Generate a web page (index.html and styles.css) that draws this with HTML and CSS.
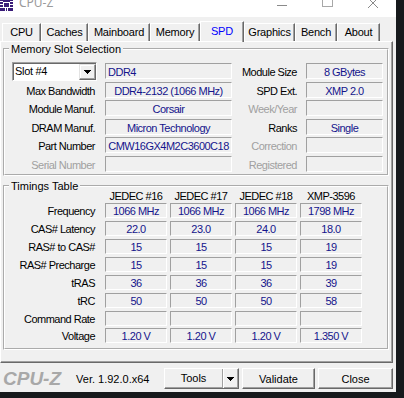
FILE: index.html
```html
<!DOCTYPE html>
<html lang="en">
<head>
    <meta charset="UTF-8">
    <title>CPU-Z</title>
    <link rel="stylesheet" href="styles.css">
</head>
<body>
    <div class="window">
        <div class="titlebar">
            <svg class="app-icon" viewBox="0 0 13 11">
                <rect width="13" height="11" fill="#3a1c78"/>
                <rect x="3.5" y="2.5" width="6" height="5" fill="none" stroke="#fff"/>
                <path d="M0 1.5h3M0 4.5h3M0 7.5h3M10 1.5h3M10 4.5h3M10 7.5h3M5.5 8v3M7.5 8v3" stroke="#fff"/>
            </svg>
            <span class="title">CPU-Z</span>
            <svg class="controls" viewBox="0 0 120 17">
                <path d="M1 5.5h10" stroke="#8a8a8a"/>
                <rect x="46.5" y="-3.5" width="10" height="10" fill="none" stroke="#a8a8a8"/>
                <path d="M92 -2l10 10M102 -2l-10 10" stroke="#8a8a8a"/>
            </svg>
        </div>

        <div class="tabs">
            <div class="tab tab-cpu">CPU</div>
            <div class="tab tab-caches">Caches</div>
            <div class="tab tab-mainboard">Mainboard</div>
            <div class="tab tab-memory">Memory</div>
            <div class="tab tab-spd active">SPD</div>
            <div class="tab tab-graphics">Graphics</div>
            <div class="tab tab-bench">Bench</div>
            <div class="tab tab-about">About</div>
        </div>

        <div class="panel">
            <fieldset class="group mem">
                <legend>Memory Slot Selection</legend>
                <div class="mem-grid">
                    <div class="slot">
                        <span class="slot-text">Slot #4</span>
                        <span class="drop">
                            <svg width="7" height="4" viewBox="0 0 7 4"><path d="M0 0h7v1H0zM1 1h5v1H1zM2 2h3v1H2zM3 3h1v1H3z" fill="#000"/></svg>
                        </span>
                    </div>
                    <div class="field left">DDR4</div>
                    <div class="label right">Module Size</div>
                    <div class="field">8 GBytes</div>

                    <div class="label">Max Bandwidth</div>
                    <div class="field">DDR4-2132 (1066 MHz)</div>
                    <div class="label right">SPD Ext.</div>
                    <div class="field">XMP 2.0</div>

                    <div class="label">Module Manuf.</div>
                    <div class="field">Corsair</div>
                    <div class="label right dim">Week/Year</div>
                    <div class="field"></div>

                    <div class="label">DRAM Manuf.</div>
                    <div class="field">Micron Technology</div>
                    <div class="label right">Ranks</div>
                    <div class="field">Single</div>

                    <div class="label">Part Number</div>
                    <div class="field">CMW16GX4M2C3600C18</div>
                    <div class="label right dim">Correction</div>
                    <div class="field"></div>

                    <div class="label dim">Serial Number</div>
                    <div class="field"></div>
                    <div class="label right dim">Registered</div>
                    <div class="field"></div>
                </div>
            </fieldset>

            <fieldset class="group timings">
                <legend>Timings Table</legend>
                <div class="tim-grid">
                    <div></div>
                    <div class="head">JEDEC #16</div>
                    <div class="head">JEDEC #17</div>
                    <div class="head">JEDEC #18</div>
                    <div class="head">XMP-3596</div>

                    <div class="label">Frequency</div>
                    <div class="field">1066 MHz</div>
                    <div class="field">1066 MHz</div>
                    <div class="field">1066 MHz</div>
                    <div class="field">1798 MHz</div>

                    <div class="label">CAS# Latency</div>
                    <div class="field">22.0</div>
                    <div class="field">23.0</div>
                    <div class="field">24.0</div>
                    <div class="field">18.0</div>

                    <div class="label">RAS# to CAS#</div>
                    <div class="field">15</div>
                    <div class="field">15</div>
                    <div class="field">15</div>
                    <div class="field">19</div>

                    <div class="label">RAS# Precharge</div>
                    <div class="field">15</div>
                    <div class="field">15</div>
                    <div class="field">15</div>
                    <div class="field">19</div>

                    <div class="label">tRAS</div>
                    <div class="field">36</div>
                    <div class="field">36</div>
                    <div class="field">36</div>
                    <div class="field">39</div>

                    <div class="label">tRC</div>
                    <div class="field">50</div>
                    <div class="field">50</div>
                    <div class="field">50</div>
                    <div class="field">58</div>

                    <div class="label">Command Rate</div>
                    <div class="field"></div>
                    <div class="field"></div>
                    <div class="field"></div>
                    <div class="field"></div>

                    <div class="label">Voltage</div>
                    <div class="field">1.20 V</div>
                    <div class="field">1.20 V</div>
                    <div class="field">1.20 V</div>
                    <div class="field">1.350 V</div>
                </div>
            </fieldset>
        </div>

        <div class="bottombar">
            <span class="logo">CPU-Z</span>
            <span class="ver">Ver. 1.92.0.x64</span>
            <div class="buttons">
                <div class="btn tools">
                    <span class="tools-text">Tools</span>
                    <span class="tools-arrow">
                        <svg width="7" height="4" viewBox="0 0 7 4"><path d="M0 0h7v1H0zM1 1h5v1H1zM2 2h3v1H2zM3 3h1v1H3z" fill="#000"/></svg>
                    </span>
                </div>
                <div class="btn validate">Validate</div>
                <div class="btn close">Close</div>
            </div>
        </div>
    </div>
</body>
</html>
```

FILE: styles.css
```css
body {
    margin: 0;
    background-color: #16191c;
    font-family: "Liberation Sans", Arial, sans-serif;
    font-size: 11px;
    color: #000;
}
.window {
    width: 396px;
    height: 392px;
    background-color: #f0f0f0;
    display: flex;
    flex-direction: column;
    overflow: hidden;
}

/* title bar */
.titlebar {
    height: 17px;
    flex: none;
    background-color: #fff;
    display: flex;
    align-items: flex-start;
    overflow: hidden;
}
.app-icon {
    width: 13px;
    height: 11px;
    flex: none;
}
.title {
    margin: -3px 0 0 6px;
    font-family: "Noto Sans", sans-serif;
    font-size: 12px;
    line-height: 12px;
    color: #9a9a9a;
}
.controls {
    margin-left: auto;
    width: 120px;
    height: 17px;
    flex: none;
}

/* tabs */
.tabs {
    height: 24px;
    flex: none;
    display: flex;
    align-items: flex-end;
    padding-left: 2px;
}
.tab {
    height: 18px;
    box-sizing: border-box;
    border: 1px solid #fff;
    border-bottom: 0;
    border-right-color: #696969;
    box-shadow: inset -1px 0 #a0a0a0;
    text-align: center;
    line-height: 16px;
    letter-spacing: -0.2px;
}
.tab.active {
    height: 21px;
    margin-bottom: -1px;
    padding-top: 1px;
    position: relative;
    z-index: 1;
    color: #0000ff;
    line-height: 17px;
}
.tab-cpu { width: 39px; }
.tab-caches { width: 47px; }
.tab-mainboard { width: 62px; }
.tab-memory { width: 50px; }
.tab-spd { width: 44px; }
.tab-graphics { width: 51px; }
.tab-bench { width: 42px; }
.tab-about { width: 43px; }

/* main panel */
.panel {
    height: 322px;
    flex: none;
    box-sizing: border-box;
    margin-right: 3px;
    border: 1px solid;
    border-color: #fff #696969 #696969 #fff;
    box-shadow: inset -1px -1px #a0a0a0;
}
.group {
    margin: 2px 3px 0 2px;
    padding: 9px 0 2px 7px;
    border: 2px groove #fff;
    min-inline-size: 0;
}
.group legend {
    padding: 0 2px;
    margin-left: -3px;
    line-height: 10px;
}
.group.timings {
    margin-top: 5px;
    padding-top: 0;
    padding-bottom: 5px;
}

.label {
    text-align: right;
    padding-right: 10px;
    line-height: 18px;
    white-space: nowrap;
    letter-spacing: -0.5px;
}
.label.right {
    padding-right: 9px;
}
.dim {
    color: #a0a0a0;
}
.field {
    box-sizing: border-box;
    height: 16px;
    border: 1px solid;
    border-color: #a0a0a0 #fff #fff #a0a0a0;
    color: #14148c;
    text-align: center;
    line-height: 16px;
    white-space: nowrap;
    letter-spacing: -0.5px;
}
.field.left {
    text-align: left;
    padding-left: 2px;
}

/* memory slot selection */
.mem-grid {
    display: grid;
    grid-template-columns: 93px 127px 74px 77px;
    grid-auto-rows: 16px;
    row-gap: 2.5px;
}
.slot {
    width: 85px;
    height: 19px;
    margin-top: -1px;
    box-sizing: border-box;
    border: 1px solid;
    border-color: #a0a0a0 #fff #fff #a0a0a0;
    box-shadow: inset 1px 1px #696969;
    background-color: #fff;
    display: flex;
}
.slot-text {
    padding-left: 2px;
    line-height: 17px;
    letter-spacing: -0.3px;
}
.drop {
    margin: 1px 0 0 auto;
    width: 17px;
    height: 16px;
    box-sizing: border-box;
    border: 1px solid;
    border-color: #e3e3e3 #696969 #696969 #e3e3e3;
    box-shadow: inset -1px -1px #a0a0a0, inset 1px 1px #fff;
    background-color: #f0f0f0;
    display: flex;
    align-items: center;
    justify-content: center;
}
.drop svg {
    display: block;
}

/* timings table */
.tim-grid {
    display: grid;
    grid-template-columns: 90px repeat(4, 62px);
    grid-template-rows: 10px repeat(8, 15px);
    column-gap: 3px;
    row-gap: 2.86px;
}
.tim-grid .label {
    padding-right: 7px;
    line-height: 16px;
}
.tim-grid .field {
    height: 15px;
    line-height: 14px;
}
.head {
    text-align: center;
    line-height: 10px;
    white-space: nowrap;
    letter-spacing: -0.5px;
}

/* bottom bar */
.bottombar {
    flex: 1;
    display: flex;
    align-items: center;
    padding: 2px 3px 0 3px;
}
.logo {
    font-size: 19px;
    font-weight: bold;
    font-style: italic;
    line-height: 19px;
    color: #a8a8a8;
}
.ver {
    margin-left: 15px;
}
.buttons {
    margin-left: auto;
    display: flex;
    gap: 3px;
}
.btn {
    height: 21px;
    box-sizing: border-box;
    border: 1px solid;
    border-color: #fff #696969 #696969 #fff;
    box-shadow: inset -1px -1px #a0a0a0;
    background-color: #f0f0f0;
    display: flex;
    align-items: center;
    justify-content: center;
}
.tools {
    width: 75px;
    justify-content: flex-start;
}
.tools-text {
    width: 57px;
    height: 19px;
    line-height: 19px;
    text-align: center;
    border-right: 1px solid #a0a0a0;
    box-shadow: 1px 0 #fff;
}
.tools-arrow {
    flex: 1;
    display: flex;
    justify-content: center;
}
.tools-arrow svg {
    display: block;
}
.validate {
    width: 73px;
}
.close {
    width: 75px;
}
```
